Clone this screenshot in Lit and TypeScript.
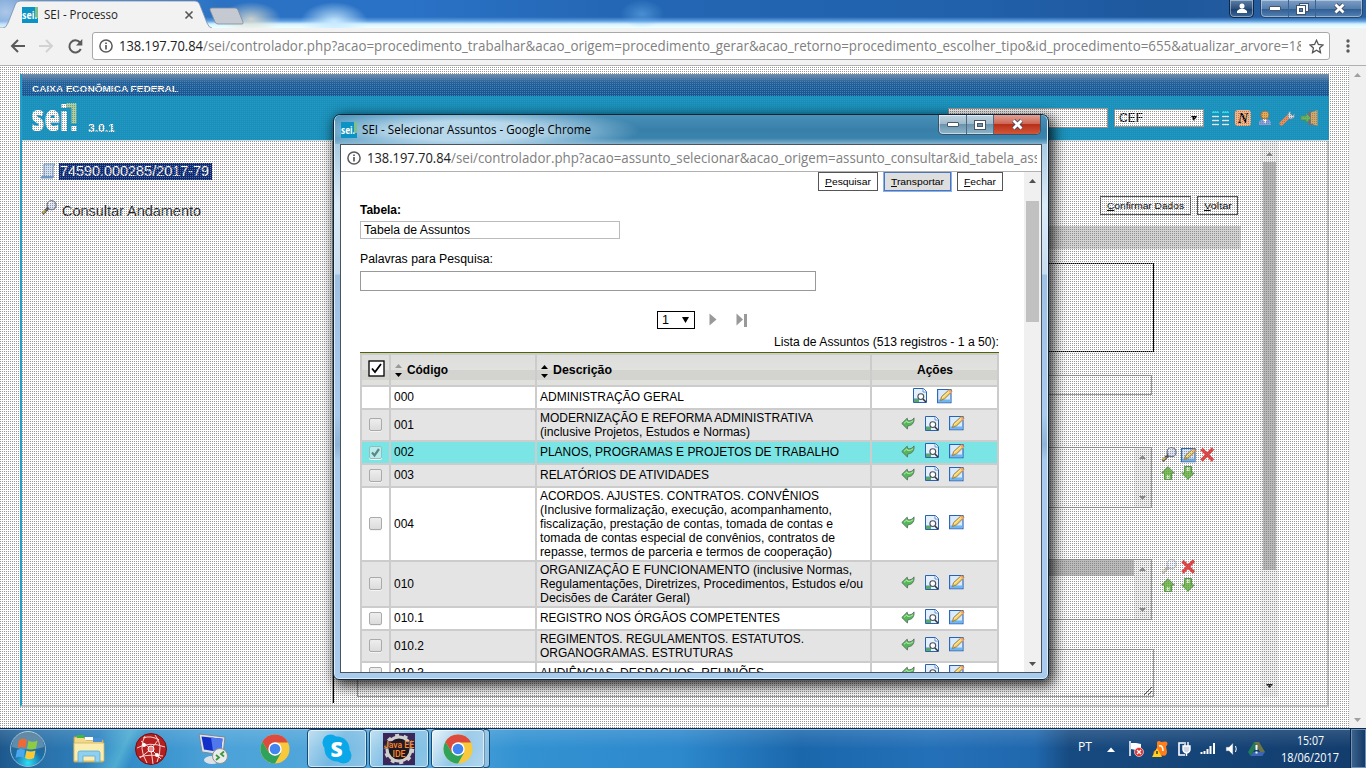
import { LitElement, html, svg, css } from "lit";
import { customElement } from "lit/decorators.js";

/* One line of text set to a known measure. */
const line = (text: string, width: number, size: number, cls = "", height = 16, base = 12) => html`
  <svg class="line ${cls}" width=${width} height=${height} font-size=${size}>
    <text x="0" y=${base} textLength=${width} lengthAdjust="spacingAndGlyphs">${text}</text>
  </svg>`;

const icon = (w: number, h: number, body: unknown, box = `0 0 ${w} ${h}`, cls = "ic") =>
  html`<svg class=${cls} width=${w} height=${h} viewBox=${box}>${body}</svg>`;

const info = icon(14, 14, svg`<circle cx="7" cy="7" r="6.1" fill="none" stroke="#5a5a5a" stroke-width="1.5"/><path d="M7 6v4.4M7 3.4v1.5" stroke="#5a5a5a" stroke-width="1.7"/>`);

const favicon = html`<span class="fav"><svg width="16" height="16"><rect width="16" height="16" fill="#0a93c4"/><rect x="13" width="3" height="11" fill="#7fc08a"/><text x="0" y="12" textLength="14" lengthAdjust="spacingAndGlyphs" font-size="10.5" font-weight="700" fill="#fff">sei.</text></svg></span>`;

const back = icon(14, 14, svg`<path d="M.8 7.500 6.200 2.200 6.800 4.800c2.500 .3 4.700 -.5 6.200-2.900 .5 5-2 7.800-6.200 7.900L6.400 13Z" fill="#53b857" stroke="#5c6f66" stroke-width=".9"/><path d="M3 7.300 6 4.800 6.300 6.300c2.500 .3 4.400-.2 5.800-1.700" stroke="#b4f0a8" fill="none"/>`);
const view = icon(14, 15, svg`<path d="M.5.500h10l3 3v11H.500Z" fill="#e4f0fc" stroke="#2a62ae"/><path d="M10 .5v3.500h3.500" fill="#fff" stroke="#4a80c4" stroke-width=".8"/><path d="M1 14v-3.500h5V14Z" fill="#58a868"/><path d="M1 10.500h4" stroke="#8fc0f0"/><circle cx="7.800" cy="8.600" r="2.900" fill="#fff" stroke="#4a5058" stroke-width="1.100"/><path d="m10 11 3 3" stroke="#333" stroke-width="1.500"/>`);
const edit = icon(16, 16, svg`<path d="M.600 1.500h13.400v13.300H.600Z" fill="#d8eafd" stroke="#2a62b4" stroke-width="1.100"/><path d="M1.200 11.500h12.300v2.700H1.200Z" fill="#6cb6f2"/><path d="m3.500 12.500 1-3.800 7.300-6.700q2.500-1 3.200 1.500l-7.300 7.200Z" fill="#f6cf62" stroke="#94733a" stroke-width=".9"/><path d="m5.200 9.800 7.200-6.600" stroke="#fff2a8"/><path d="m11.600 2 3 3" stroke="#f6a080" stroke-width="1.500"/>`);
const lupa = icon(16, 15, svg`<circle cx="10.600" cy="5.200" r="4.500" fill="#dce4fa" stroke="#74788c" stroke-width="1.300"/><path d="M7.500 5a3 3 0 0 1 3-3" stroke="#fff" fill="none" stroke-width="1.300"/><path d="m7.300 8.200-5.800 5.600" stroke="#555" stroke-width="3"/><path d="m4.400 10.400-2.500 2.500" stroke="#eeb83c" stroke-width="1.800"/>`);
const cross = icon(15, 15, svg`<path d="M1.500 2 13 13.500M13 1.500 1.500 13.500" stroke="#f03a3a" stroke-width="3.400"/>`);
const up = icon(14, 14, svg`<path d="M7 .7 13.300 7H10.600v6.400H3.400V7H.7Z" fill="#76c44c" stroke="#4a9440"/><path d="M5.500 13V9h3v4Z" fill="#d4f0c0"/>`);
const down = icon(14, 14, svg`<path d="M7 13.300 .7 7H3.400V.600h7.200V7h2.700Z" fill="#76c44c" stroke="#4a9440"/><path d="M5.500 1v4h3V1Z" fill="#d4f0c0"/>`);
const tri = (dir: "up" | "down", color: string) => icon(7, 4, svg`<path d=${dir === "up" ? "M0 4h7L3.500 0Z" : "M0 0h7L3.500 4Z"} fill=${color}/>`);
const chrome = icon(30, 30, svg`<circle cx="15" cy="15" r="14.500" fill="#f8c93c"/><path d="M2.400 7.800A14.500 14.500 0 0 1 27.600 7.800L27.900 8.500H15L8.800 18.600Z" fill="#dd4b3e"/><path d="M2.400 7.800A14.500 14.500 0 0 0 15 29.500L21.200 18.400 15 21.600 8.800 18.400Z" fill="#2fa35a"/><circle cx="15" cy="15" r="6.700" fill="#fff"/><circle cx="15" cy="15" r="5.300" fill="#4285f0"/>`);

const winMin = icon(12, 5, svg`<rect x=".5" y=".5" width="11" height="4" rx=".5" fill="#fff" stroke="#4a5568"/>`);
const winMax = icon(12, 10, svg`<rect x="2" y="2" width="8" height="6" fill="none" stroke="#fff" stroke-width="2.500"/><rect x=".5" y=".5" width="11" height="9" fill="none" stroke="#4a5568"/><rect x="3.500" y="3.500" width="5" height="3" fill="none" stroke="#4a5568"/>`);
const winRestore = icon(13, 12, svg`<rect x="3.500" y=".5" width="9" height="8" fill="#e8f0f8" stroke="#40526c"/><rect x=".5" y="2.500" width="9" height="9" fill="#fff" stroke="#40526c"/><rect x="3.500" y="5.500" width="3" height="3" fill="#5a84b8" stroke="#40526c"/>`);
const winClose = icon(13, 11, svg`<path d="m2.500 1.500 8 8m0-8-8 8" stroke="#3c465a" stroke-width="4.400"/><path d="m2.500 1.500 8 8m0-8-8 8" stroke="#fff" stroke-width="2.800"/>`);

type Row = { code: string; desc: [string, number][]; check?: boolean; on?: boolean };
const rows: Row[] = [
  { code: "000", desc: [["ADMINISTRAÇÃO GERAL", 144]], check: false },
  { code: "001", desc: [["MODERNIZAÇÃO E REFORMA ADMINISTRATIVA", 273], ["(inclusive Projetos, Estudos e Normas)", 210]] },
  { code: "002", desc: [["PLANOS, PROGRAMAS E PROJETOS DE TRABALHO", 299]], on: true },
  { code: "003", desc: [["RELATÓRIOS DE ATIVIDADES", 169]] },
  { code: "004", desc: [["ACORDOS. AJUSTES. CONTRATOS. CONVÊNIOS", 279], ["(Inclusive formalização, execução, acompanhamento,", 292], ["fiscalização, prestação de contas, tomada de contas e", 293], ["tomada de contas especial de convênios, contratos de", 295], ["repasse, termos de parceria e termos de cooperação)", 292]] },
  { code: "010", desc: [["ORGANIZAÇÃO E FUNCIONAMENTO (inclusive Normas,", 312], ["Regulamentações, Diretrizes, Procedimentos, Estudos e/ou", 323], ["Decisões de Caráter Geral)", 150]] },
  { code: "010.1", desc: [["REGISTRO NOS ÓRGÃOS COMPETENTES", 240]] },
  { code: "010.2", desc: [["REGIMENTOS. REGULAMENTOS. ESTATUTOS.", 264], ["ORGANOGRAMAS. ESTRUTURAS", 193]] },
  { code: "010.3", desc: [["AUDIÊNCIAS. DESPACHOS. REUNIÕES", 224]] },
];

@customElement("app-root")
export class AppRoot extends LitElement {
  static styles = css`
    :host { display: block; position: relative; width: 1366px; height: 768px; overflow: hidden; font-family: "Liberation Sans", Arial, sans-serif; font-size: 12px; color: #000; }
    * { box-sizing: border-box; }
    svg { display: block; flex: none; }
    .line { overflow: visible; fill: currentColor; }
    .ui, .fav { font-family: "Open Sans", "Noto Sans", sans-serif; }
    .bold { font-weight: 700; }
    .shell { height: 768px; display: flex; flex-direction: column; }

    .titlebar { height: 28px; flex: none; display: flex; justify-content: space-between; align-items: flex-start;
      background:
        radial-gradient(ellipse 30px 17px at 251px 19px, rgba(225,222,205,.85), transparent),
        radial-gradient(ellipse 34px 20px at 334px 22px, #c9eaff, transparent),
        radial-gradient(ellipse 22px 14px at 642px 14px, rgba(110,180,240,.5), transparent),
        radial-gradient(ellipse 30px 24px at 6px 12px, rgba(180,205,235,.9), transparent),
        linear-gradient(#fff0 0 17px, #5d9ee0 21px, #d6f0ff 24px, #eaffff 27px),
        linear-gradient(90deg, #6a9ad2, #2b72c4 16%, #2a72c6 30%, #2467b4 45%, #2161ac 70%, #1e589d 85%, #2a60a0); }
    .caps { display: flex; padding-right: 3px; gap: 6px; }
    .cap { height: 18px; display: flex; border: 1px solid #23466f; border-top: 0; border-radius: 0 0 5px 5px; box-shadow: inset 0 0 0 1px #ffffff66; background: linear-gradient(#7d9fc6, #567fae 50%, #2d5c92 51%, #5682b4); }
    .cap.dark { width: 25px; justify-content: center; align-items: center; background: linear-gradient(#5c80a8, #2d507c 50%, #173d6c 51%, #3d6898); border-color: #0e2848; }
    .cap span { display: flex; align-items: center; justify-content: center; border-right: 1px solid #3a6294; }
    .cap span:last-child { border: 0; }
    .w28 { width: 28px; } .w27 { width: 27px; } .w47 { width: 46px; }

    .toolbar { height: 38px; flex: none; background: #f2f2f2; border-bottom: 1px solid #b0b0b0; display: flex; align-items: center; padding: 0 0 1px 10px; }
    .nav { display: flex; gap: 14px; width: 82px; flex: none; align-items: center; }
    .omni { width: 1238px; flex: none; height: 28px; background: #fff; border: 1px solid #a8a8a8; border-radius: 3px; display: flex; align-items: center; padding-left: 6px; margin-right: 16px; }
    .url { width: 1182px; flex: none; height: 20px; overflow: hidden; display: flex; margin: 0 8px 0 6px; color: #808080; }
    .host { color: #222; }

    .view { flex: 1; display: flex; background: #fff; min-height: 0; }
    .page { width: 1349px; position: relative; padding: 8px 20px 21px; }
    .mesh { position: absolute; inset: 0; background: conic-gradient(at 1px 1px, #0000 75%, rgba(125,125,125,.8) 0) 0 1px / 2px 2px; }
    .sys { width: 17px; background: #f0f0f0; display: flex; flex-direction: column; justify-content: space-between; align-items: center; padding: 7px 0 6px; }
    .frame { height: 633px; border-left: 2px solid #10a5d8; border-right: 2px solid #c4c4c4; border-bottom: 2px solid #ccc; display: flex; flex-direction: column; }
    .org { height: 22px; background: linear-gradient(#6e94bc, #1a64a8 38%, #0a58a2); color: #fff; padding: 5px 0 0 10px; margin-right: -2px; }
    .brand { height: 45px; background: #0598cc; display: flex; justify-content: space-between; margin-right: -2px; padding: 0 10px; border-bottom: 1px solid #c6dfe8; }
    .logo { display: flex; color: #fff; gap: 11px; }
    .logo .line { margin-top: 19px; }
    .tools { display: flex; padding-top: 12px; align-items: flex-start; }
    .field { background: #fff; border: 1px solid #999; }
    .search { width: 160px; height: 20px; margin-right: 6px; }
    .unit { width: 90px; height: 18px; margin: 1px 8px 0 0; display: flex; align-items: center; justify-content: space-between; padding: 0 6px 0 4px; }
    .tl { display: flex; gap: 6px; align-items: center; height: 20px; }

    .cols { flex: 1; display: flex; min-height: 0; }
    .tree { width: 312px; height: 562px; border-right: 1px solid #000; box-shadow: inset -1px 0 #aaa; padding: 21px 0 0 19px; }
    .proc { display: flex; gap: 3px; align-items: center; height: 18px; }
    .sel { background: #082a7c; color: #fff; padding: 0 3px 0 1px; height: 17px; }
    .andam { display: flex; gap: 5px; margin-top: 20px; height: 20px; color: #222; }
    .andam .line { margin-top: 3px; }
    .form { width: 927px; padding: 55px 0 0 23px; display: flex; flex-direction: column; }
    .acts { display: flex; justify-content: flex-end; gap: 6px; padding-right: 23px; }
    .btn { height: 19px; border: 1px solid #555; background: #fff; display: flex; justify-content: center; align-items: center; }
    .band { width: 884px; height: 23px; background: #d2d2d2; margin-top: 11px; }
    .fs { width: 797px; height: 89px; border: 1px solid #000; margin-top: 14px; }
    .f1 { width: 795px; height: 20px; margin-top: 23px; }
    .pair { display: flex; gap: 9px; height: 61px; }
    .p1 { margin-top: 52px; } .p2 { margin-top: 51px; }
    .list { width: 795px; flex: none; height: 61px; display: flex; justify-content: flex-end; }
    .opt { flex: 1; height: 16px; background: #bbb; }
    .sb { width: 17px; background: #f0f0f0; display: flex; flex-direction: column; justify-content: space-between; align-items: center; padding: 7px 0; }
    .side { display: grid; grid-template-columns: repeat(3, 16px); grid-template-rows: 15px 14px; gap: 4px 3.5px; align-content: start; }
    .faded { opacity: .4; }
    .ta { width: 797px; height: 48px; margin-top: 29px; display: flex; justify-content: flex-end; align-items: flex-end; padding: 1px; }
    .isb { width: 17px; display: flex; flex-direction: column; align-items: center; background: #f0f0f0; padding: 11px 0 9px; margin: 0 0 8px; }
    .isb i { width: 13px; height: 408px; background: #b9b9b9; margin-top: 6px; }
    .isb .ic:last-child { margin-top: auto; }

    .popup { position: absolute; left: 333px; top: 114px; width: 716px; height: 566px; border: 1px solid #122434; border-radius: 7px 7px 6px 6px; padding: 0 6px 7px; box-shadow: 3px 4px 13px 2px rgba(0,0,0,.8), inset 0 0 0 1px #d9edfa;
      background: linear-gradient(#3b84ae 0, #3b84ae 20px, #a9cbe3 29px, #dcebf8 90px, #c8dcf0 159px, #9fc2e4 160px, #a8cbee 300px, #8fb4d8 330px, #a8cbee 345px); }
    .ptitle { height: 29px; margin: 0 -5px; border-radius: 6px 6px 0 0; display: flex; justify-content: space-between; padding: 0 6px 0 6px;
      background: radial-gradient(ellipse 175px 24px at 130px 16px, rgba(190,220,238,.95) 40%, rgba(150,195,222,.7) 70%, transparent), linear-gradient(#4a91b8, #3880aa 50%, #3a83ad 80%, #86b5d0); }
    .pt { display: flex; gap: 5px; padding-top: 7px; align-items: flex-start; }
    .pcaps { display: flex; height: 20px; border: 1px solid #3b5368; border-top: 0; border-radius: 0 0 5px 5px; box-shadow: inset 0 0 0 1px #ffffff80; background: linear-gradient(#c3d5e2, #9bb8ca 48%, #6b93ac 50%, #8db6cc); }
    .pcaps span { display: flex; align-items: center; justify-content: center; border-right: 1px solid #4f6a80; }
    .pcaps .x { border: 0; background: linear-gradient(#e2a093, #cd6452 48%, #b92f17 50%, #d0573a); border-radius: 0 0 4px 0; }
    .client { border: 1px solid #49545e; height: 529px; background: #fff; display: flex; flex-direction: column; }
    .paddr { height: 27px; flex: none; border-bottom: 1px solid #b0b0b0; display: flex; align-items: center; padding-left: 6px; }
    .purl { width: 670px; height: 20px; overflow: hidden; display: flex; margin-left: 6px; color: #808080; }
    .pbody { flex: 1; display: flex; min-height: 0; }
    .doc { width: 683px; flex: none; padding: 0 25px 0 19px; overflow: hidden; }
    .psb { width: 17px; background: #f0f0f0; display: flex; flex-direction: column; align-items: center; padding: 7px 0 6px; }
    .psb i { width: 13px; height: 121px; background: #c1c1c1; margin-top: 18px; }
    .psb .ic:last-child { margin-top: auto; }
    .pb { display: flex; justify-content: flex-end; gap: 6px; margin-right: -4px; }
    .foc { background: #dedede; border-color: #4a76b8; box-shadow: 0 0 0 1px #8ab0ee; }
    .lab { height: 16px; }
    .lab1 { margin-top: 11px; } .lab2 { margin-top: 12px; }
    .in1 { width: 260px; height: 18px; border-color: #bbb; margin-top: 3px; padding: 0 3px; display: flex; }
    .in2 { width: 456px; height: 20px; margin-top: 4px; }
    .pager { display: flex; align-items: center; margin: 20px 0 0 297px; height: 18px; }
    .psel { width: 38px; height: 18px; border: 1px solid #000; background: #fff; display: flex; align-items: center; justify-content: space-between; padding: 0 5px 0 4px; margin-right: 14px; }
    .cap2 { display: flex; justify-content: flex-end; height: 23px; padding-top: 5px; }
    .grid { width: 639px; border-top: 1px solid #4e6400; background: #ccc; padding: 2px; display: grid; row-gap: 2px; }
    .tr { display: grid; grid-template-columns: 27px 144px 333px 125px; column-gap: 2px; min-height: 21px; }
    .tr > div { background: #fff; display: flex; align-items: center; }
    .alt > div { background: #e4e4e4; }
    .tr.on > div { background: #7be5e5; }
    .tr.th { height: 30px; }
    .tr.th > div { background: linear-gradient(#dededc, #e1e1df 50%, #d3d3d0 51% 83%, #e0e0dd 84%); font-weight: 700; padding-left: 4px; }
    .tr > .k { justify-content: center; padding-bottom: 1px; }
    .tr > .c { padding: 0 0 1px 3px; }
    .tr > .d { padding: 1px 0 1px 3px; flex-direction: column; justify-content: center; align-items: flex-start; }
    .tr.one > .d { padding: 0 0 1px 3px; }
    .tr > .a { justify-content: center; gap: 10px; padding: 0 3px 4px 0; }
    .tr.th > .a { padding: 0 0 0 1px; }
    .tr.th > .k { padding: 0 0 4px 1px; }
    .box { width: 13px; height: 13px; border: 1px solid #aaa; border-radius: 2px; background: linear-gradient(#eee, #dcdcdc); box-shadow: 0 1px #f4f4f4; }
    .on .box { background: #b9eceb; border-color: #8fc0c0; }
    .sort { display: flex; flex-direction: column; gap: 5px; margin: 2px 5px 0 0; }

    .task { height: 40px; flex: none; border-top: 1px solid #0d2a4c; box-shadow: inset 0 1px #8cbbe0; display: flex; justify-content: space-between;
      background: linear-gradient(115deg, transparent 92px, rgba(120,215,225,.45) 120px, transparent 133px), linear-gradient(#ffffff22, #fff0 50%), linear-gradient(90deg, #1d588c, #2a70a8 40px, #2e86c4 110px, #4aa2d8 210px, #56aadc 420px, #3392d2 520px, #2d88cc 680px, #1b67ac 800px, #2470b8 930px, #2068ae 1035px, #174a80 1070px, #123c6c); }
    .apps { display: flex; }
    .app { width: 62px; display: flex; align-items: center; justify-content: center; }
    .start { width: 55px; margin-right: 3px; }
    .open { width: 60px; margin: 0 1px; border: 1px solid #194a74; border-radius: 4px; box-shadow: inset 0 0 0 1px #ffffff99; background: linear-gradient(120deg, #ffffff99, #ffffff33 50%, #ffffff55); }
    .act { width: 54px; background: linear-gradient(120deg, #ffffffdd, #ffffff66 50%, #ffffff99); }
    .stack { width: 6px; margin-left: -2px; border: 1px solid #194a74; border-left: 0; border-radius: 0 4px 4px 0; background: #ffffff66; }
    .tray { display: flex; align-items: center; color: #fff; }
    .clock { display: flex; flex-direction: column; align-items: center; width: 60px; margin: 0 11px 0 7px; }
    .peek { width: 15px; height: 39px; border: 1px solid #6f93b8; background: linear-gradient(90deg, #3b628c, #143a66); box-shadow: -1px 0 #0a2444; }
    .tray > svg { margin-right: 8px; }
  `;

  private btn(key: string, rest: string, width: number, textW: number, cls = "") {
    return html`<div class="btn ${cls}" style="width:${width}px">
      <svg class="line" width=${textW} height="13" font-size="9.5"><text y="10" textLength=${textW} lengthAdjust="spacingAndGlyphs"><tspan text-decoration="underline">${key}</tspan>${rest}</text></svg>
    </div>`;
  }

  private row(r: Row, i: number) {
    return html`<div class="tr ${r.desc.length === 1 ? "one" : ""} ${r.on ? "on" : i % 2 ? "alt" : ""}">
      <div class="k">${r.check === false ? "" : html`<span class="box">${r.on ? icon(11, 11, svg`<path d="m2 5.500 2.500 3L9 2" stroke="#5e8888" stroke-width="2.200" fill="none"/>`) : ""}</span>`}</div>
      <div class="c">${line(r.code, r.code.length === 3 ? 20 : 30, 12, "", 14, 11)}</div>
      <div class="d">${r.desc.map(([t, w]) => line(t, w, 12, "", 14, 11))}</div>
      <div class="a">${r.check === false ? "" : back}${view}${edit}</div>
    </div>`;
  }

  private main() {
    return html`
      <div class="titlebar ui">
        <svg width="260" height="28">
          <path d="M0 28h3q3 0 5-5L15.500 4q1.500-3 5-3H195q3 0 4.500 3L207 23q2 5 5 5Z" fill="#f2f2f2"/>
          <path d="M0 28h3q3 0 5-5L15.500 4q1.500-3 5-3H195q3 0 4.500 3L207 23q2 5 5 5" fill="none" stroke="#7790ac" stroke-width=".8"/>
          <path d="M212 8h23q2 0 3 2l5 12q.5 2-1 2h-24q-2 0-3-2l-5-12q-.5-2 2-2Z" fill="#c5cad2" stroke="#7f8b9c" stroke-width=".8"/>
          <rect x="22" y="7" width="16" height="16" fill="#0a93c4"/><rect x="35" y="7" width="3" height="11" fill="#7fc08a"/>
          <text x="22" y="19" textLength="15" lengthAdjust="spacingAndGlyphs" font-size="11" font-weight="700" fill="#fff">sei.</text>
          <text x="44" y="19" textLength="74" lengthAdjust="spacingAndGlyphs" font-size="12" fill="#222">SEI - Processo</text>
          <path d="m185.500 11.500 7 7m0-7-7 7" stroke="#555" stroke-width="1.600"/>
        </svg>
        <div class="caps">
          <div class="cap dark">${icon(10, 11, svg`<circle cx="5" cy="3" r="2.500" fill="#fff"/><path d="M0 10V8q2-2.500 5-2.500T10 8v2Z" fill="#fff"/>`)}</div>
          <div class="cap"><span class="w28">${winMin}</span><span class="w27">${winRestore}</span><span class="w47">${winClose}</span></div>
        </div>
      </div>
      <div class="toolbar ui">
        <div class="nav">
          ${icon(15, 14, svg`<path d="M15 7H2M8 1 2 7l6 6" stroke="#5a5a5a" stroke-width="2" fill="none"/>`)}
          ${icon(15, 14, svg`<path d="M0 7h13M7 1l6 6-6 6" stroke="#d2d2d2" stroke-width="2" fill="none"/>`)}
          ${icon(15, 15, svg`<path d="M12.800 10A6 6 0 1 1 12 3.500" stroke="#5a5a5a" stroke-width="2" fill="none"/><path d="M14.300 0v6.500H8Z" fill="#5a5a5a"/>`)}
        </div>
        <div class="omni">${info}
          <div class="url">
            ${line("138.197.70.84", 84, 14.5, "host", 20, 15)}
            ${line("/sei/controlador.php?acao=procedimento_trabalhar&acao_origem=procedimento_gerar&acao_retorno=procedimento_escolher_tipo&id_procedimento=655&atualizar_arvore=1&", 1103, 14.5, "", 20, 15)}
          </div>
          ${icon(15, 15, svg`<path d="m7.500 1.300 1.900 4.200 4.600.500-3.400 3.100.9 4.500-4-2.300-4 2.300.9-4.500L1 6l4.600-.5Z" fill="none" stroke="#555" stroke-width="1.300"/>`)}
        </div>
        ${icon(4, 14, svg`<circle cx="2" cy="2" r="1.700" fill="#5a5a5a"/><circle cx="2" cy="7" r="1.700" fill="#5a5a5a"/><circle cx="2" cy="12" r="1.700" fill="#5a5a5a"/>`)}
      </div>`;
  }

  private page() {
    return html`<div class="page">
      <div class="frame">
        <div class="org">${line("CAIXA ECONÔMICA FEDERAL", 146, 9.5, "bold", 14, 13)}</div>
        <div class="brand">
          <div class="logo">
            <svg class="ui" width="45" height="40"><text x="-1" y="35" textLength="29" lengthAdjust="spacingAndGlyphs" font-size="37" font-weight="800" fill="#fff">se</text><path d="M29.500 15h5.500v20h-5.500ZM29.500 8h5.500v4h-5.500ZM39.500 30h5v5h-5Z" fill="#fff"/><path d="M34 7h10.500v20.500h-5V11.500H34Z" fill="#a8d2a0"/></svg>
            ${line("3.0.1", 27, 11, "bold", 20, 16.5)}
          </div>
          <div class="tools">
            <div class="field search"></div>
            <div class="field unit">${line("CEF", 24, 12)}${icon(6, 5, svg`<path d="M0 0h6L3 5Z"/>`)}</div>
            <div class="tl">
              ${icon(17, 15, svg`<path d="M0 1h7M10 1h7" stroke="#17e4f4" stroke-width="2"/><path d="M0 5.500h7M10 5.500h7M0 9.500h7M10 9.500h7M0 13.500h7M10 13.500h7" stroke="#d5e9ee" stroke-width="1.600"/>`)}
              ${icon(16, 16, svg`<rect width="16" height="16" rx="3" fill="#ffb27e"/><text x="3" y="13" font-size="14" font-style="italic" font-weight="700" font-family="Liberation Serif, serif">N</text>`)}
              ${icon(16, 16, svg`<path d="M2 15v-3q1-3 6-3t6 3v3Z" fill="#7f9fe0"/><path d="m6 9 2 5 2-5Z" fill="#fff"/><circle cx="8" cy="5" r="4" fill="#f3a946" stroke="#a8662a" stroke-width=".8"/>`)}
              ${icon(16, 16, svg`<path d="m2.500 13.500 7-7" stroke="#f58a4e" stroke-width="4" stroke-linecap="round"/><path d="M9 7V3.500L11.500 1v3l2 1.500L16 4.500 14.500 8 11 9Z" fill="#d7dce4" stroke="#8c929e" stroke-width=".7"/>`)}
              ${icon(18, 16, svg`<path d="M7 1h9v14H7Z" fill="#667080"/><path d="M10 2.500 16.500 0v16L10 13.500Z" fill="#d8a860"/><path d="M0 6h5V3l5 5-5 5v-3H0Z" fill="#63bb5a" stroke="#4d8f48" stroke-width=".7"/>`)}
            </div>
          </div>
        </div>
        <div class="cols">
          <div class="tree">
            <div class="proc">
              ${icon(15, 16, svg`<path d="M3 1h11l-2 3v11H0l3-2Z" fill="#cfe2f8" stroke="#6d98c8"/><path d="M3 13H0l1 2h11l1-2Z" fill="#6f9ed4"/>`)}
              <div class="sel">${line("74590.000285/2017-79", 149, 14, "", 17, 13)}</div>
            </div>
            <div class="andam">${lupa}${line("Consultar Andamento", 139, 14, "", 17, 13)}</div>
          </div>
          <div class="form">
            <div class="acts">${this.btn("C", "onfirmar Dados", 91, 77)}${this.btn("V", "oltar", 41, 28)}</div>
            <div class="band"></div>
            <div class="fs"></div>
            <div class="field f1"></div>
            <div class="pair p1">
              <div class="field list"><div class="sb">${tri("up", "#888")}${tri("down", "#888")}</div></div>
              <div class="side">${lupa}${edit}${cross}${up}${down}</div>
            </div>
            <div class="pair p2">
              <div class="field list"><div class="opt"></div><div class="sb">${tri("up", "#888")}${tri("down", "#888")}</div></div>
              <div class="side"><div class="faded">${lupa}</div>${cross}<span></span>${up}${down}</div>
            </div>
            <div class="field ta">${icon(8, 8, svg`<path d="m0 8 8-8M4 8l4-4" stroke="#555"/>`)}</div>
          </div>
          <div class="isb">${tri("up", "#888")}<i></i>${tri("down", "#222")}</div>
        </div>
      </div>
      <div class="mesh"></div>
    </div>
    <div class="sys">${tri("up", "#a0a0a0")}${tri("down", "#a0a0a0")}</div>`;
  }

  private popup() {
    return html`<div class="popup">
      <div class="ptitle ui">
        <div class="pt">${favicon}${line("SEI - Selecionar Assuntos - Google Chrome", 229, 12)}</div>
        <div class="pcaps"><span class="w28">${winMin}</span><span class="w27">${winMax}</span><span class="w47 x">${winClose}</span></div>
      </div>
      <div class="client">
        <div class="paddr ui">${info}<div class="purl">
          ${line("138.197.70.84", 84, 14.5, "host", 20, 15)}
          ${line("/sei/controlador.php?acao=assunto_selecionar&acao_origem=assunto_consultar&id_tabela_ass", 589, 14.5, "", 20, 15)}
        </div></div>
        <div class="pbody">
          <div class="doc">
            <div class="pb">${this.btn("P", "esquisar", 60, 46)}${this.btn("T", "ransportar", 67, 53, "foc")}${this.btn("F", "echar", 46, 32)}</div>
            <div class="lab lab1">${line("Tabela:", 41, 12, "bold")}</div>
            <div class="field in1">${line("Tabela de Assuntos", 106, 12)}</div>
            <div class="lab lab2">${line("Palavras para Pesquisa:", 133, 12)}</div>
            <div class="field in2"></div>
            <div class="pager">
              <div class="psel">${line("1", 7, 12)}${icon(7, 6, svg`<path d="M0 0h7L3.500 6Z"/>`)}</div>
              ${icon(34, 14, svg`<path d="M.5 .500v12L7.500 6.500Z" fill="#999"/><path d="M27.500 .500v12L34 6.500Z" fill="#999"/>`)}
              ${icon(4, 13, svg`<path d="M1 0h3v13H1Z" fill="#999"/>`)}
            </div>
            <div class="cap2">${line("Lista de Assuntos (513 registros - 1 a 50):", 225, 12)}</div>
            <div class="grid">
              <div class="tr th">
                <div class="k">${icon(17, 17, svg`<rect x="1" y="1" width="15" height="15" fill="#fff" stroke="#000" stroke-width="1.300"/><path d="m4 8.500 3 3.500 6-8" stroke="#000" stroke-width="1.800" fill="none"/>`)}</div>
                <div class="c"><span class="sort">${tri("up", "#999")}${tri("down", "#000")}</span>${line("Código", 41, 12)}</div>
                <div><span class="sort">${tri("up", "#000")}${tri("down", "#000")}</span>${line("Descrição", 59, 12)}</div>
                <div class="a">${line("Ações", 36, 12)}</div>
              </div>
              ${rows.map((r, i) => this.row(r, i))}
            </div>
          </div>
          <div class="psb">${tri("up", "#505050")}<i></i>${tri("down", "#505050")}</div>
        </div>
      </div>
    </div>`;
  }

  private taskbar() {
    return html`<div class="task ui">
      <div class="apps">
        <div class="app start">${icon(38, 38, svg`<defs><radialGradient id="orb" cx=".5" cy=".9" r=".9"><stop offset="0" stop-color="#2ce0f8"/><stop offset=".45" stop-color="#1b6ea8"/><stop offset="1" stop-color="#33607f"/></radialGradient></defs><circle cx="19" cy="19" r="17.500" fill="url(#orb)" stroke="#8fb9d4"/><path d="M3 17A16 16 0 0 1 35 17Q19 22 3 17Z" fill="#fff" opacity=".25"/><path d="M10 10q4-2.500 8 0l-1.500 8q-4-2-8 0Z" fill="#ee6a32"/><path d="M19.500 10.500q4 2.500 9 0L27 18.500q-5 2-9 0Z" fill="#8ccb42"/><path d="M8 20q4-2 8 0l-1.500 8q-4-2.500-8 0Z" fill="#4aa8ee"/><path d="M17.500 20.500q4 2 9 0L25 28q-5 2.500-9 0Z" fill="#fcc934"/>`)}</div>
        <div class="app">${icon(32, 30, svg`<path d="M1 3h10l2 3h17v22H1Z" fill="#f0d98a" stroke="#bf9f4a"/><path d="M4 1h7v3H4Z" fill="#3db83d"/><path d="M12 3h8v3h-8Z" fill="#fff"/><path d="M20 4h9v4h-9Z" fill="#4a90d8"/><path d="M1 9h30v18H1Z" fill="#faedb2" stroke="#d0b35e" stroke-width=".8"/><path d="M5 28v-9q0-2 2-2h18q2 0 2 2v9h-5v-6H10v6Z" fill="#8fd0f0" stroke="#5aa8d2" stroke-width=".8"/>`)}</div>
        <div class="app">${icon(32, 32, svg`<circle cx="16" cy="16" r="15.500" fill="#b51f1f" stroke="#761010"/><path d="M8 5Q16 2 24 7M2 15Q14 8 30 14M4 24q10-3 24-1M10 3Q3 15 12 30M20 2q9 10 2 27M6 8l10 8 10 10M24 6 16 16 5 25M16 16l2 15" stroke="#f5d4d0" fill="none"/><circle cx="16" cy="16" r="3" fill="#e88" stroke="#fff"/><circle cx="9" cy="12" r="2" fill="#fff"/><circle cx="22" cy="22" r="2" fill="#fff"/>`)}</div>
        <div class="app">${icon(32, 32, svg`<path d="m2 1 26 3-2 18-21-3Z" fill="#dce2ea" stroke="#7c8898"/><path d="m4.500 3.500 21 2.300-1.500 13.500L7 16.500Z" fill="#1230c8"/><path d="m14 4.500 11.500 1.300L24 19 16 18Z" fill="#4e78ec"/><ellipse cx="15" cy="27" rx="8" ry="4" fill="#dde2e8"/><circle cx="23" cy="23" r="7.500" fill="#e9ecea" stroke="#8e9490"/><path d="m19 22 3 2.500-3 2.500M27 18.500 24 21l3 2.500" stroke="#3f9440" stroke-width="1.800" fill="none"/>`)}</div>
        <div class="app">${chrome}</div>
        <div class="app open">${icon(30, 30, svg`<circle cx="15" cy="15" r="12.500" fill="#0aa8e8"/><circle cx="8.500" cy="8.500" r="8" fill="#0aa8e8"/><circle cx="21.500" cy="21.500" r="8" fill="#0aa8e8"/><text x="8.500" y="22.500" font-size="21" font-weight="800" fill="#fff">S</text>`)}</div>
        <div class="app open">${icon(32, 32, svg`<rect width="32" height="32" fill="#3c2858"/><circle cx="16" cy="16" r="12" fill="#1c1820" stroke="#cfcfcf" stroke-width="3"/><circle cx="16" cy="16" r="14" fill="none" stroke="#cfcfcf" stroke-width="2.500" stroke-dasharray="4 4.800"/><path d="M0 8h32v7.500H0Z" fill="#2a1a2c" opacity=".75"/><g font-family="Roboto, sans-serif" font-size="9.5" fill="#ff8a28" font-weight="500"><text x="1" y="15" textLength="30" lengthAdjust="spacingAndGlyphs">Java EE</text><text x="9.500" y="24" textLength="13" lengthAdjust="spacingAndGlyphs">IDE</text></g>`)}</div>
        <div class="app open act">${chrome}</div><div class="stack"></div>
      </div>
      <div class="tray">
        ${line("PT", 14, 12, "", 20, 12)}
        ${icon(20, 16, svg`<path d="M7 11h8l-4-4.500Z" fill="#fff"/>`)}
        ${icon(16, 16, svg`<path d="M2 0v15" stroke="#fff" stroke-width="1.500"/><path d="M3 2h5l5 1v6H8L3 8Z" fill="#fff"/><circle cx="11" cy="11" r="4.500" fill="#e03030" stroke="#fff" stroke-width=".6"/><path d="m9 9 4 4m0-4-4 4" stroke="#fff" stroke-width="1.300"/>`)}
        ${icon(16, 16, svg`<path d="M5 1q2-2 4 0l5-.5q3 2 0 5l1 5.500q-1 5-4 3.500l-6 .5q-5 0-3-5 3-1 3-4Z" fill="#ff7e1a"/><path d="M7 5q4-1 4 5" stroke="#fff" stroke-width="1.500" fill="none"/><path d="m5 7 5 9H0Z" fill="#ffd21e"/><path d="M5 10v3" stroke="#222" stroke-width="1.300"/>`)}
        ${icon(16, 16, svg`<path d="M8 2H3v12h6" stroke="#fff" stroke-width="1.600" fill="none"/><path d="M7 5h7v4q-1 3-3.500 3T7 9ZM9 1v4M12 1v4M10.500 12v3" stroke="#fff" stroke-width="1.400" fill="#cfd8e4"/>`)}
        ${icon(16, 16, svg`<path d="M1.500 13v-2M4.500 13v-3M7.500 13V8M10.500 13V5M14 13V2" stroke="#fff" stroke-width="2"/>`)}
        ${icon(16, 16, svg`<path d="M2 6h3l4-4v12l-4-4H2Z" fill="#fff" stroke="#4a6888" stroke-width=".6"/><path d="M11.500 5q1.500 3 0 6" stroke="#fff" fill="none"/>`)}
        ${icon(17, 15, svg`<path d="M6 1h5l6 10h-5Z" fill="#6c7548"/><path d="M6 1 0 11l2.500 4 6-9.500Z" fill="#227a58"/><path d="m2.500 15 2.700-4H17l-2.700 4Z" fill="#3c66b4"/><path d="M8.500 4v5M8.500 10.500v2" stroke="#fff" stroke-width="2"/>`)}
        <div class="clock">${line("15:07", 27, 12, "", 17, 13)}${line("18/06/2017", 58, 12, "", 17, 13)}</div>
        <div class="peek"></div>
      </div>
    </div>`;
  }

  render() {
    return html`<div class="shell">
        ${this.main()}
        <div class="view">${this.page()}</div>
        ${this.taskbar()}
      </div>
      ${this.popup()}`;
  }
}
